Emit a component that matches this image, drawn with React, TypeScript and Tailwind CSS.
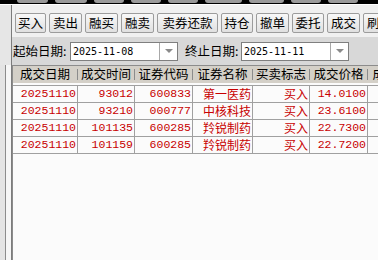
import React from "react";

const cjk = { fontFamily: '"Noto Sans CJK SC", "Noto Sans", sans-serif' };
const mono = { fontFamily: '"Liberation Mono", "DejaVu Sans Mono", monospace' };

const buttons = [
  { label: "买入", w: "w-[31px]" },
  { label: "卖出", w: "w-[33px]" },
  { label: "融买", w: "w-[33px]" },
  { label: "融卖", w: "w-[33px]" },
  { label: "卖券还款", w: "w-[61px]" },
  { label: "持仓", w: "w-[32px]" },
  { label: "撤单", w: "w-[33px]" },
  { label: "委托", w: "w-[32px]" },
  { label: "成交", w: "w-[33px]" },
  { label: "刷新", w: "w-[33px]" },
];

const tabs = ["w-[31px]", "w-[32px]", "w-[30px]", "w-[30px]", "w-[30px]", "w-[37px]", "w-[35px]", "w-[30px]", "w-[30px]"];

const columns = [
  { title: "成交日期", w: "w-[65px]" },
  { title: "成交时间", w: "w-[57px]" },
  { title: "证券代码", w: "w-[58px]" },
  { title: "证券名称", w: "w-[60px]" },
  { title: "买卖标志", w: "w-[57px]" },
  { title: "成交价格", w: "w-[58px]" },
  { title: "成交数量", w: "w-[60px]" },
];

const rows = [
  ["20251110", "93012", "600833", "第一医药", "买入", "14.0100"],
  ["20251110", "93210", "000777", "中核科技", "买入", "23.6100"],
  ["20251110", "101135", "600285", "羚锐制药", "买入", "22.7300"],
  ["20251110", "101159", "600285", "羚锐制药", "买入", "22.7200"],
];

const textCols = [3, 4];

function DateBox({ value }: { value: string }) {
  return (
    <div className="flex h-[19px] w-[108px] border border-[#7f7f7f] bg-white">
      <div className="flex flex-1 items-center pl-[2px] text-[10px] text-black" style={{ fontFamily: '"DejaVu Sans Mono", monospace' }}>
        {value}
      </div>
      <div className="flex w-[18px] items-center justify-center border-l border-[#a8a8a8] bg-white">
        <div className="h-0 w-0 border-x-[4px] border-t-[4px] border-x-transparent border-t-[#8a8a8a]" />
      </div>
    </div>
  );
}

export default function App() {
  return (
    <div className="flex h-[260px] w-[378px] flex-col overflow-hidden bg-[#f0f0f0]" style={cjk}>
      {/* top tab strip */}
      <div className="flex h-[4px] shrink-0 gap-[7px] bg-black pl-[17px]">
        {tabs.map((w, i) => (
          <div key={i} className={`${w} h-[3px] rounded-b-[3px] bg-[#9a9a9a]`} />
        ))}
      </div>
      <div className="h-px shrink-0 bg-white" />

      <div className="flex flex-1">
        {/* left strip */}
        <div className="flex w-[12px] shrink-0 flex-col">
          <div className="h-[60px] border-r border-[#7c7c7c] bg-[#e6e6e6]" />
          <div className="flex flex-1">
            <div className="w-[5px] bg-[#e4e4e4]" />
            <div className="w-px bg-[#8c8c8c]" />
            <div className="w-[5px] bg-[#f6f6f6]" />
            <div className="w-px bg-[#7c7c7c]" />
          </div>
        </div>

        <div className="flex min-w-0 flex-1 flex-col">
          {/* toolbar */}
          <div className="flex h-[32px] shrink-0 gap-[3px] pl-[3px] pt-[8px]">
            {buttons.map((b) => (
              <div
                key={b.label}
                className={`${b.w} flex h-[20px] shrink-0 items-center justify-center whitespace-nowrap rounded-[2px] border border-[#9c9c9c] bg-gradient-to-b from-[#f8f8f8] to-[#e0e0e0] text-[12.5px] leading-none text-black`}
              >
                {b.label}
              </div>
            ))}
          </div>

          {/* date row */}
          <div className="flex h-[28px] shrink-0 items-center bg-[#d8d8d8] pl-[1px] text-[12.5px] text-black">
            <span className="w-[57px]">起始日期:</span>
            <DateBox value="2025-11-08" />
            <span className="ml-[7px] w-[56px]">终止日期:</span>
            <DateBox value="2025-11-11" />
          </div>

          {/* table */}
          <div className="flex flex-1 flex-col border-l border-[#8c8c8c] bg-[#fbfbfb]">
            <div className="flex h-[18px] shrink-0 border-t border-[#8c8c8c] bg-[#d4d0c8] text-[12.5px] text-black">
              {columns.map((c) => (
                <div key={c.title} className={`${c.w} flex shrink-0 items-center`}>
                  <span className="flex-1 whitespace-nowrap text-center leading-none">{c.title}</span>
                  <div className="h-[11px] w-px shrink-0 bg-[#8c8c8c]" />
                </div>
              ))}
            </div>
            <div className="h-[2px] shrink-0" />
            <div className="shrink-0 border-t border-[#a0a0a0]">
              {rows.map((r, ri) => (
                <div key={ri} className="flex h-[17px] border-b border-[#a0a0a0] text-[#c80000]">
                  {r.map((v, ci) => (
                    <div
                      key={ci}
                      className={`${columns[ci].w} flex shrink-0 items-center justify-end whitespace-nowrap border-r border-[#a0a0a0] pr-px leading-none`}
                      style={textCols.includes(ci) ? { ...cjk, fontSize: "12px" } : { ...mono, fontSize: "11.5px" }}
                    >
                      {v}
                    </div>
                  ))}
                  <div className="w-[60px] shrink-0 border-r border-[#a0a0a0]" />
                </div>
              ))}
            </div>
          </div>
        </div>
      </div>
    </div>
  );
}
